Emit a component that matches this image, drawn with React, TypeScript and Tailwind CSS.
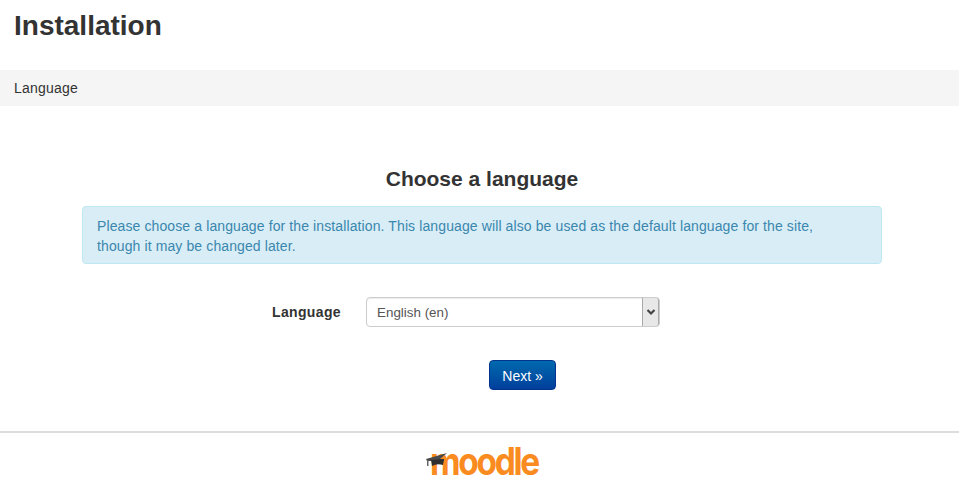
export default function App() {
  return (
    <div className="h-[500px] w-[959px] overflow-hidden bg-white font-['Liberation_Sans',Arial,sans-serif] text-[#333]">
      <header className="flex h-[70px] items-start px-[14px] pt-[9px]">
        <h1 className="text-[28px] leading-[33px] font-bold text-[#333]">Installation</h1>
      </header>
      <nav className="flex h-[36px] items-center bg-[#f5f5f5] px-[14px] text-[14px] tracking-[0.2px] text-[#333]">Language</nav>
      <main className="ml-[82px] flex w-[800px] flex-col items-center pt-[60px]">
        <h2 className="text-[21px] leading-[26px] font-bold text-[#333]">Choose a language</h2>
        <div className="mt-[14px] h-[58px] w-full rounded-[4px] border border-[#bce8f1] bg-[#d9edf7] pt-[9px] pr-[35px] pl-[14px] text-[14px] leading-[20px] tracking-[0.11px] text-[#3a87ad]">
          Please choose a language for the installation. This language will also be used as the default language for the site, though it may be changed later.
        </div>
        <div className="mt-[33px] flex h-[30px] w-full items-center">
          <label className="ml-[190px] w-[94px] text-[14px] font-bold tracking-[0.35px] text-[#333]">Language</label>
          <div className="flex h-[30px] w-[294px] items-stretch rounded-[4px] border border-[#ccc] bg-white shadow-[inset_0_1px_1px_rgba(0,0,0,0.075)]">
            <span className="flex flex-1 items-center pt-[2px] pl-[10px] text-[13.4px] text-[#555]">English (en)</span>
            <span className="flex w-[17px] items-center justify-center rounded-r-[3px] border-x border-[#aaa] bg-[#e8e8e8]">
              <svg width="10" height="8" viewBox="0 0 10 8"><path d="M1.5 2 L5 5.5 L8.5 2" fill="none" stroke="#444" strokeWidth="2.2" /></svg>
            </span>
          </div>
        </div>
        <button className="mt-[33px] ml-[407px] flex h-[30px] w-[67px] items-center justify-center self-start rounded-[4px] border border-[#04338f] bg-gradient-to-b from-[#0069ad] to-[#003f9c] pt-[2px] text-[14px] text-white">Next »</button>
      </main>
      <footer className="mt-[41px] flex flex-col items-center border-t-2 border-[#ddd]">
        <div className="ml-[4px] flex h-[60px] items-start pt-[7px]">
          <div className="relative h-[34px] w-[112px]">
            <span className="absolute top-[-3px] left-[4px] origin-left scale-x-[0.88] font-['Inter',sans-serif] text-[38px] leading-[48px] font-bold tracking-[-2.6px] text-[#f98b20]">moodle</span>
            <svg className="absolute top-[13px] left-0" width="22" height="15" viewBox="0 0 22 15">
              <path d="M0 6 L21 0 L14 6 L18 6 L18 8 L1 8 Z" fill="#4a4a4a" />
              <path d="M5 7 L18 6 L17 12 Q11 10 6 13 Z" fill="#2f2f2f" />
              <path d="M1 7 L1 13 L2.5 13 L2.5 7 Z" fill="#666" />
            </svg>
          </div>
        </div>
      </footer>
    </div>
  );
}
